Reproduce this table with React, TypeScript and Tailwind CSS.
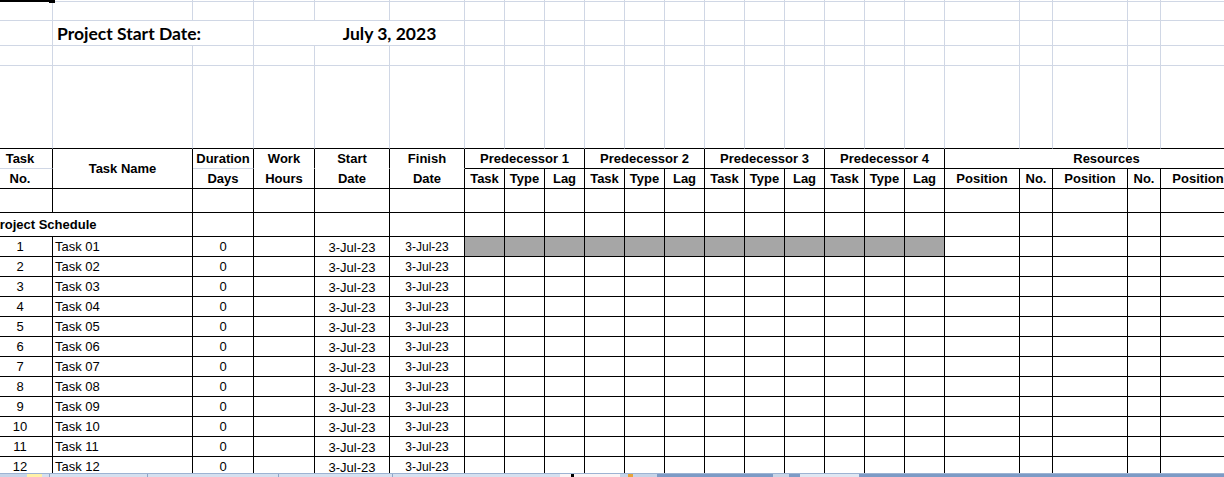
import React from "react";

const LIGHT = "border-[#d0d7e5]";
const COLS =
  "grid-cols-[65px_140px_61px_61px_75px_75px_repeat(12,40px)_75px_33px_75px_33px_75px_33px]";
const ROWS =
  "grid-rows-[2px_19px_25px_20px_83px_20px_20px_24px_24px_repeat(12,20px)]";

const preds = [1, 2, 3, 4];
const resources = ["Position", "No.", "Position", "No.", "Position", "No."];

function blanks(n: number, cls: string, key: string) {
  return Array.from({ length: n }).map((_, i) => (
    <div key={`${key}-${i}`} className={cls} />
  ));
}

const black = "border-r border-b border-black";
const hcell = `${black} flex items-center justify-center font-bold text-[13px] leading-[19px] whitespace-nowrap overflow-hidden`;

export default function App() {
  const tasks = Array.from({ length: 12 }).map((_, i) => i + 1);

  return (
    <div className="w-[1224px] h-[477px] overflow-hidden bg-white flex flex-col font-['Liberation_Sans',Arial,sans-serif] text-black">
      {/* sheet */}
      <div className="h-[473px] overflow-hidden">
        <div className={`-ml-[12px] grid w-[1281px] ${COLS} ${ROWS}`}>
          {/* row 0 - bottom of active cell */}
          <div className={`relative border-r ${LIGHT}`}>
            <div className="h-[2px] w-[61px] bg-black" />
            <div className="absolute left-[61px] top-0 w-[6px] h-[3px] bg-black z-10" />
          </div>
          {blanks(23, `border-r border-b ${LIGHT}`, "r0")}

          {/* row 1 */}
          {blanks(24, `border-r border-b ${LIGHT}`, "r1")}

          {/* row 2 - project start date */}
          <div className={`border-r border-b ${LIGHT}`} />
          <div
            className={`col-span-2 border-r border-b ${LIGHT} flex items-center pl-[4px] pt-[2px] font-['Lato',sans-serif] font-bold text-[17.5px] leading-[20px] whitespace-nowrap`}
          >
            Project Start Date:
          </div>
          <div className={`border-b ${LIGHT}`} />
          <div
            className={`col-span-2 border-r border-b ${LIGHT} flex items-center justify-center pt-[2px] font-['Lato',sans-serif] font-bold text-[17.5px] leading-[20px] whitespace-nowrap`}
          >
            July 3, 2023
          </div>
          {blanks(18, `border-r border-b ${LIGHT}`, "r2")}

          {/* row 3 */}
          {blanks(24, `border-r border-b ${LIGHT}`, "r3")}

          {/* row 4 - tall spacer, black bottom */}
          {blanks(24, `border-r border-b ${LIGHT} border-b-black`, "r4")}

          {/* header row 1 */}
          <div className={`${hcell} border-b-[#d0d7e5]`}>Task</div>
          <div className={`${hcell} row-span-2`}>Task Name</div>
          <div className={`${hcell} border-b-[#d0d7e5]`}>Duration</div>
          <div className={`${hcell} border-b-white`}>Work</div>
          <div className={`${hcell} border-b-white`}>Start</div>
          <div className={`${hcell} border-b-white`}>Finish</div>
          {preds.map((p) => (
            <div key={`ph-${p}`} className={`${hcell} col-span-3`}>
              Predecessor {p}
            </div>
          ))}
          <div className={`${hcell} col-span-6`}>Resources</div>

          {/* header row 2 */}
          <div className={hcell}>No.</div>
          <div className={hcell}>Days</div>
          <div className={hcell}>Hours</div>
          <div className={hcell}>Date</div>
          <div className={hcell}>Date</div>
          {preds.map((p) =>
            ["Task", "Type", "Lag"].map((t) => (
              <div key={`pt-${p}-${t}`} className={hcell}>
                {t}
              </div>
            ))
          )}
          {resources.map((r, i) => (
            <div key={`rs-${i}`} className={hcell}>
              {r}
            </div>
          ))}

          {/* empty row */}
          {blanks(24, black, "empty")}

          {/* project schedule row */}
          <div
            className={`col-span-2 ${black} flex items-center pl-[3px] font-bold text-[13px] leading-[19px] whitespace-nowrap`}
          >
            Project Schedule
          </div>
          {blanks(22, black, "ps")}

          {/* tasks */}
          {tasks.map((n) => (
            <React.Fragment key={`t-${n}`}>
              <div className={`${black} flex items-center justify-center text-[13px] leading-[19px]`}>
                {n}
              </div>
              <div className={`${black} flex items-center pl-[2px] text-[13px] leading-[19px] whitespace-nowrap`}>
                Task {String(n).padStart(2, "0")}
              </div>
              <div className={`${black} flex items-center justify-center text-[13px] leading-[19px]`}>
                0
              </div>
              <div className={black} />
              <div className={`${black} flex items-end justify-center pb-[1px] text-[13px] leading-[15px]`}>
                3-Jul-23
              </div>
              <div className={`${black} flex items-center justify-center text-[12px] leading-[18px]`}>
                3-Jul-23
              </div>
              {blanks(12, `${black} ${n === 1 ? "bg-[#a6a6a6]" : ""}`, `tp-${n}`)}
              {blanks(6, black, `tr-${n}`)}
            </React.Fragment>
          ))}
        </div>
      </div>

      {/* sheet tab strip */}
      <div className="h-[4px] flex border-t border-[#9db3d3]">
        <div className="w-[27px] bg-[#c6d4e8]" />
        <div className="w-[15px] bg-[#fff1a8]" />
        <div className="w-[518px] bg-[#d5e0ef] flex">
          <div className="w-[7px]" />
          <div className="w-[98px] border-l border-[#8ea5c8]" />
          <div className="w-[131px] border-l border-[#8ea5c8]" />
          <div className="w-[114px] border-l border-[#8ea5c8]" />
          <div className="w-[168px] border-l border-[#8ea5c8]" />
        </div>
        <div className="w-[60px] bg-[#fbf3f4] flex">
          <div className="ml-[11px] w-[3px] bg-black" />
        </div>
        <div className="w-[37px] bg-[#c6d4e8] flex">
          <div className="ml-[8px] w-[5px] bg-[#e7a43a]" />
        </div>
        <div className="flex-1 bg-[#7d9bc6] flex">
          <div className="ml-[116px] w-[16px] bg-[#c9d5e6]" />
          <div className="ml-[11px] w-[59px] bg-[#dfe7f2]" />
        </div>
      </div>
    </div>
  );
}
